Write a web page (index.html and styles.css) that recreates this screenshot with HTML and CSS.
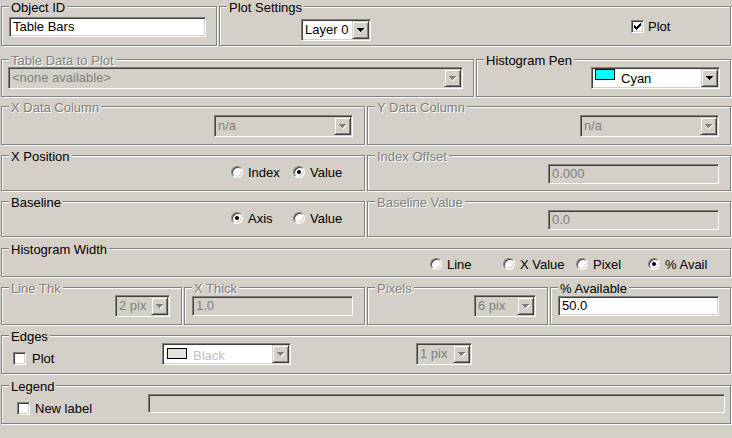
FILE: index.html
```html
<!DOCTYPE html>
<html>
<head>
<meta charset="utf-8">
<title>Table Bars</title>
<link rel="stylesheet" href="styles.css">
</head>
<body>
<div class="dlg">

  <div class="row r1">
    <div class="grp">
      <div class="ttl">Object ID</div>
      <div class="bd at10 in7">
        <div class="edit w197">Table Bars</div>
      </div>
    </div>
    <div class="grp">
      <div class="ttl">Plot Settings</div>
      <div class="bd at12 in81">
        <div class="combo w70"><span class="cv">Layer 0</span><span class="cbtn"><svg class="arr" width="8" height="5" viewBox="0 0 8 5"><path d="M0 0h7v1H0zM1 1h5v1H1zM2 2h3v1H2zM3 3h1v1H3z"/></svg></span></div>
        <div class="opt ck g4 plotck"><span class="cb"><svg width="7" height="7" viewBox="0 0 7 7"><path d="M0 2h1v3H0zM1 3h1v3H1zM2 4h1v3H2zM3 3h1v3H3zM4 2h1v3H4zM5 1h1v3H5zM6 0h1v3H6z"/></svg></span><span>Plot</span></div>
      </div>
    </div>
  </div>

  <div class="row r2">
    <div class="grp">
      <div class="ttl dis">Table Data to Plot</div>
      <div class="bd at7 in6">
        <div class="combo dis w455"><span class="cv">&lt;none available&gt;</span><span class="cbtn"><svg class="arr" width="8" height="5" viewBox="0 0 8 5"><path class="hi" d="M1 1h7v1H1zM2 2h5v1H2zM3 3h3v1H3zM4 4h1v1H4z"/><path d="M0 0h7v1H0zM1 1h5v1H1zM2 2h3v1H2zM3 3h1v1H3z"/></svg></span></div>
      </div>
    </div>
    <div class="grp">
      <div class="ttl">Histogram Pen</div>
      <div class="bd at7 in114">
        <div class="combo w129"><span class="cv pen"><span class="sw cyan"></span><span class="swt">Cyan</span></span><span class="cbtn"><svg class="arr" width="8" height="5" viewBox="0 0 8 5"><path d="M0 0h7v1H0zM1 1h5v1H1zM2 2h3v1H2zM3 3h1v1H3z"/></svg></span></div>
      </div>
    </div>
  </div>

  <div class="row r3">
    <div class="grp">
      <div class="ttl dis">X Data Column</div>
      <div class="bd at8 in212">
        <div class="combo dis w139"><span class="cv">n/a</span><span class="cbtn"><svg class="arr" width="8" height="5" viewBox="0 0 8 5"><path class="hi" d="M1 1h7v1H1zM2 2h5v1H2zM3 3h3v1H3zM4 4h1v1H4z"/><path d="M0 0h7v1H0zM1 1h5v1H1zM2 2h3v1H2zM3 3h1v1H3z"/></svg></span></div>
      </div>
    </div>
    <div class="grp">
      <div class="ttl dis">Y Data Column</div>
      <div class="bd at8 in212">
        <div class="combo dis w139"><span class="cv">n/a</span><span class="cbtn"><svg class="arr" width="8" height="5" viewBox="0 0 8 5"><path class="hi" d="M1 1h7v1H1zM2 2h5v1H2zM3 3h3v1H3zM4 4h1v1H4z"/><path d="M0 0h7v1H0zM1 1h5v1H1zM2 2h3v1H2zM3 3h1v1H3z"/></svg></span></div>
      </div>
    </div>
  </div>

  <div class="row r4">
    <div class="grp">
      <div class="ttl">X Position</div>
      <div class="bd at10 in229">
        <div class="opt w62"><span class="rb"></span><span>Index</span></div>
        <div class="opt"><span class="rb on"></span><span>Value</span></div>
      </div>
    </div>
    <div class="grp">
      <div class="ttl dis">Index Offset</div>
      <div class="bd at8 in180">
        <div class="edit dis w171">0.000</div>
      </div>
    </div>
  </div>

  <div class="row r5">
    <div class="grp">
      <div class="ttl">Baseline</div>
      <div class="bd at10 in229">
        <div class="opt w62"><span class="rb on"></span><span>Axis</span></div>
        <div class="opt"><span class="rb"></span><span>Value</span></div>
      </div>
    </div>
    <div class="grp">
      <div class="ttl dis">Baseline Value</div>
      <div class="bd at8 in180">
        <div class="edit dis w171">0.0</div>
      </div>
    </div>
  </div>

  <div class="row r6">
    <div class="grp">
      <div class="ttl">Histogram Width</div>
      <div class="bd at9 in428">
        <div class="opt w73"><span class="rb"></span><span>Line</span></div>
        <div class="opt w73"><span class="rb"></span><span>X Value</span></div>
        <div class="opt w72"><span class="rb"></span><span>Pixel</span></div>
        <div class="opt"><span class="rb on"></span><span>% Avail</span></div>
      </div>
    </div>
  </div>

  <div class="row r7">
    <div class="grp">
      <div class="ttl dis">Line Thk</div>
      <div class="bd at7 in113">
        <div class="combo dis w55"><span class="cv">2 pix</span><span class="cbtn"><svg class="arr" width="8" height="5" viewBox="0 0 8 5"><path class="hi" d="M1 1h7v1H1zM2 2h5v1H2zM3 3h3v1H3zM4 4h1v1H4z"/><path d="M0 0h7v1H0zM1 1h5v1H1zM2 2h3v1H2zM3 3h1v1H3z"/></svg></span></div>
      </div>
    </div>
    <div class="grp">
      <div class="ttl dis">X Thick</div>
      <div class="bd at8 in7">
        <div class="edit dis w161">1.0</div>
      </div>
    </div>
    <div class="grp">
      <div class="ttl dis">Pixels</div>
      <div class="bd at7 in106">
        <div class="combo dis w62"><span class="cv">6 pix</span><span class="cbtn"><svg class="arr" width="8" height="5" viewBox="0 0 8 5"><path class="hi" d="M1 1h7v1H1zM2 2h5v1H2zM3 3h3v1H3zM4 4h1v1H4z"/><path d="M0 0h7v1H0zM1 1h5v1H1zM2 2h3v1H2zM3 3h1v1H3z"/></svg></span></div>
      </div>
    </div>
    <div class="grp">
      <div class="ttl">% Available</div>
      <div class="bd at8 in7">
        <div class="edit w161">50.0</div>
      </div>
    </div>
  </div>

  <div class="row r8">
    <div class="grp">
      <div class="ttl">Edges</div>
      <div class="bd at7 in11">
        <div class="opt ck g6 w149 edgeck"><span class="cb"></span><span>Plot</span></div>
        <div class="combo w129"><span class="cv blk"><span class="sw gray"></span><span class="swt lt">Black</span></span><span class="cbtn"><svg class="arr" width="8" height="5" viewBox="0 0 8 5"><path class="hi" d="M1 1h7v1H1zM2 2h5v1H2zM3 3h3v1H3zM4 4h1v1H4z"/><path d="M0 0h7v1H0zM1 1h5v1H1zM2 2h3v1H2zM3 3h1v1H3z"/></svg></span></div>
        <div class="combo dis w56 pix1"><span class="cv">1 pix</span><span class="cbtn"><svg class="arr" width="8" height="5" viewBox="0 0 8 5"><path class="hi" d="M1 1h7v1H1zM2 2h5v1H2zM3 3h3v1H3zM4 4h1v1H4z"/><path d="M0 0h7v1H0zM1 1h5v1H1zM2 2h3v1H2zM3 3h1v1H3z"/></svg></span></div>
      </div>
    </div>
  </div>

  <div class="row r9">
    <div class="grp">
      <div class="ttl">Legend</div>
      <div class="bd at8 in15">
        <div class="opt ck g5 w131 legck"><span class="cb"></span><span>New label</span></div>
        <div class="edit dis w577 h19"></div>
      </div>
    </div>
  </div>

</div>
</body>
</html>
```

FILE: styles.css
```css
html, body {
  margin: 0;
  padding: 0;
}

body {
  width: 732px;
  height: 438px;
  overflow: hidden;
  background: #d4d0c8;
  color: #000;
  font-family: "Liberation Sans", Arial, sans-serif;
  font-size: 13px;
}

.dlg {
  padding-left: 1px;
}

/* rows of group boxes */
.row {
  display: grid;
  column-gap: 2px;
}
.r1 { margin-top: 6px;  height: 40px; grid-template-columns: 216px 512px; }
.r2 { margin-top: 13px; height: 38px; grid-template-columns: 473px 255px; }
.r3 { margin-top: 9px;  height: 39px; grid-template-columns: 364px 364px; }
.r4 { margin-top: 10px; height: 36px; grid-template-columns: 364px 364px; }
.r5 { margin-top: 10px; height: 36px; grid-template-columns: 364px 364px; }
.r6 { margin-top: 11px; height: 29px; grid-template-columns: 730px; }
.r7 { margin-top: 10px; height: 38px; grid-template-columns: 181px 181px 181px 181px; }
.r8 { margin-top: 10px; height: 39px; grid-template-columns: 730px; }
.r9 { margin-top: 11px; height: 39px; grid-template-columns: 730px; }

/* etched group box */
.grp {
  box-sizing: border-box;
  min-width: 0;
  border: 1px solid #808080;
  box-shadow: inset 1px 1px 0 #fff, 1px 1px 0 #fff;
}

.ttl {
  width: max-content;
  margin: -6px 0 -8px 7px;
  padding: 0 2px;
  line-height: 14px;
  background: #d4d0c8;
  white-space: nowrap;
}

.dis,
.ttl.dis {
  color: #808080;
}
.ttl.dis {
  text-shadow: 1px 1px 0 #fff;
}

/* group body */
.bd {
  display: flex;
  align-items: flex-start;
}
.at7  { padding-top: 7px; }
.at8  { padding-top: 8px; }
.at9  { padding-top: 9px; }
.at10 { padding-top: 10px; }
.at12 { padding-top: 12px; }

.in6   { padding-left: 6px; }
.in7   { padding-left: 7px; }
.in11  { padding-left: 11px; }
.in15  { padding-left: 15px; }
.in81  { padding-left: 81px; }
.in106 { padding-left: 106px; }
.in113 { padding-left: 113px; }
.in114 { padding-left: 114px; }
.in180 { padding-left: 180px; }
.in212 { padding-left: 212px; }
.in229 { padding-left: 229px; }
.in428 { padding-left: 428px; }

.w55  { width: 55px; }
.w56  { width: 56px; }
.w62  { width: 62px; }
.w70  { width: 70px; }
.w72  { width: 72px; }
.w73  { width: 73px; }
.w129 { width: 129px; }
.w131 { width: 131px; }
.w139 { width: 139px; }
.w149 { width: 149px; }
.w161 { width: 161px; }
.w171 { width: 171px; }
.w197 { width: 197px; }
.w455 { width: 455px; }
.w577 { width: 577px; }

/* sunken edit field */
.edit {
  box-sizing: border-box;
  flex: none;
  height: 20px;
  padding: 1px 3px;
  line-height: 16px;
  white-space: nowrap;
  overflow: hidden;
  background: #fff;
  border: 1px solid;
  border-color: #808080 #fff #fff #808080;
  box-shadow: inset 1px 1px 0 #404040, inset -1px -1px 0 #d4d0c8;
}
.edit.dis {
  background: #d4d0c8;
}
.edit.h19 {
  height: 19px;
}

/* combo box */
.combo {
  box-sizing: border-box;
  flex: none;
  display: flex;
  height: 22px;
  padding: 1px;
  background: #fff;
  border: 1px solid;
  border-color: #808080 #fff #fff #808080;
  box-shadow: inset 1px 1px 0 #404040, inset -1px -1px 0 #d4d0c8;
}
.combo.dis {
  background: #d4d0c8;
}
.cv {
  flex: 1;
  min-width: 0;
  padding-left: 2px;
  line-height: 18px;
  white-space: nowrap;
  overflow: hidden;
}
.cbtn {
  box-sizing: border-box;
  flex: none;
  width: 17px;
  height: 18px;
  display: flex;
  align-items: center;
  justify-content: center;
  background: #d4d0c8;
  border: 1px solid;
  border-color: #d4d0c8 #404040 #404040 #d4d0c8;
  box-shadow: inset 1px 1px 0 #fff, inset -1px -1px 0 #808080;
}
.arr {
  display: block;
  shape-rendering: crispEdges;
  fill: #000;
  margin: 1px 0 0 1px;
}
.combo.dis .arr,
.arr .hi + path {
  fill: #808080;
}
.arr .hi {
  fill: #fff;
}

/* owner drawn colour combos */
.cv.pen,
.cv.blk {
  display: flex;
  align-items: flex-start;
}
.cv.pen {
  padding-left: 2px;
}
.cv.blk {
  padding-left: 3px;
}
.sw {
  box-sizing: border-box;
  flex: none;
  width: 20px;
  height: 11px;
  border: 1px solid #000;
}
.sw.cyan {
  background: #00ffff;
}
.sw.gray {
  margin-top: 3px;
  background: #e4e2de;
}
.swt {
  margin-left: 6px;
  padding-top: 2px;
  line-height: 16px;
}
.cv.blk .swt {
  padding-top: 3px;
  line-height: 15px;
}
.swt.lt {
  color: #c0c0c0;
}
.pix1 {
  margin-left: 125px;
}

/* radio / check options */
.opt {
  flex: none;
  display: flex;
  align-items: center;
  gap: 5px;
  height: 12px;
  white-space: nowrap;
}
.opt.ck {
  height: 13px;
}
.g4 { gap: 4px; }
.g5 { gap: 5px; }
.g6 { gap: 6px; }

.plotck {
  margin-left: 260px;
  margin-top: 1px;
}
.edgeck {
  margin-top: 9px;
}
.legck {
  margin-top: 8px;
}

.rb {
  box-sizing: border-box;
  flex: none;
  width: 12px;
  height: 12px;
  border-radius: 50%;
  display: flex;
  align-items: center;
  justify-content: center;
  background: #fff;
  border: 1px solid;
  border-color: #808080 #fff #fff #808080;
  box-shadow: inset 1px 1px 0 #404040, inset -1px -1px 0 #d4d0c8;
}
.rb.on::after {
  content: "";
  width: 4px;
  height: 4px;
  border-radius: 50%;
  background: #000;
}

.cb {
  box-sizing: border-box;
  flex: none;
  width: 13px;
  height: 13px;
  display: flex;
  align-items: center;
  justify-content: center;
  background: #fff;
  border: 1px solid;
  border-color: #808080 #fff #fff #808080;
  box-shadow: inset 1px 1px 0 #404040, inset -1px -1px 0 #d4d0c8;
}
.cb svg {
  display: block;
  shape-rendering: crispEdges;
  fill: #000;
}
```
